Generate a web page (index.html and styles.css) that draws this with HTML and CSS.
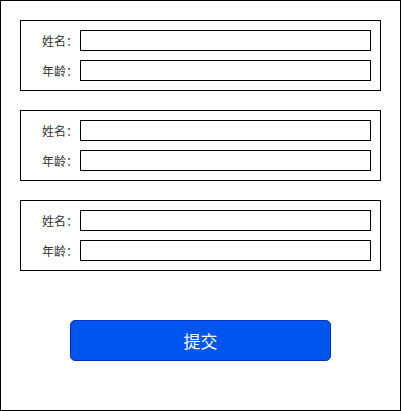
FILE: index.html
```html
<!DOCTYPE html>
<html lang="zh">
<head>
  <meta charset="UTF-8" />
  <meta name="viewport" content="width=device-width, initial-scale=1.0" />
  <title>表单</title>
  <link rel="stylesheet" href="styles.css">
</head>
<body>
  <div class="pagina">
    <div class="grupo">
      <div class="fila"><label class="etiqueta">姓名：</label><input class="campo" type="text" /></div>
      <div class="fila"><label class="etiqueta">年龄：</label><input class="campo" type="text" /></div>
    </div>
    <div class="grupo">
      <div class="fila"><label class="etiqueta">姓名：</label><input class="campo" type="text" /></div>
      <div class="fila"><label class="etiqueta">年龄：</label><input class="campo" type="text" /></div>
    </div>
    <div class="grupo">
      <div class="fila"><label class="etiqueta">姓名：</label><input class="campo" type="text" /></div>
      <div class="fila"><label class="etiqueta">年龄：</label><input class="campo" type="text" /></div>
    </div>
    <button class="boton">提交</button>
  </div>
</body>
</html>
```

FILE: styles.css
```css
body {
  margin: 0;
  padding: 0;
  font-family: 'Liberation Sans', 'Noto Sans CJK SC', sans-serif;
  color: #333;
  background-color: #fff;
}
.pagina {
  box-sizing: border-box;
  width: 401px;
  height: 411px;
  border: 1px solid #000;
  padding: 19px;
  display: flex;
  flex-direction: column;
  gap: 19px;
}
.grupo {
  box-sizing: border-box;
  width: 361px;
  border: 1px solid #000;
  padding: 9px;
  display: flex;
  flex-direction: column;
  gap: 9px;
}
.fila {
  display: flex;
  align-items: center;
  height: 21px;
}
.etiqueta {
  width: 50px;
  padding-right: 2px;
  box-sizing: border-box;
  text-align: right;
  font-size: 12px;
  color: #333;
}
.campo {
  box-sizing: border-box;
  width: 291px;
  height: 21px;
  margin: 0;
  border: 1px solid #000;
  padding: 0 4px;
  outline: none;
}
.boton {
  box-sizing: border-box;
  width: 261px;
  height: 41px;
  margin: 30px 0 0 50px;
  background-color: #0055ee;
  border: 1px solid #0033bb;
  border-radius: 5px;
  color: #fff;
  font-family: 'Noto Sans CJK SC', sans-serif;
  font-size: 17px;
  cursor: pointer;
}
```
